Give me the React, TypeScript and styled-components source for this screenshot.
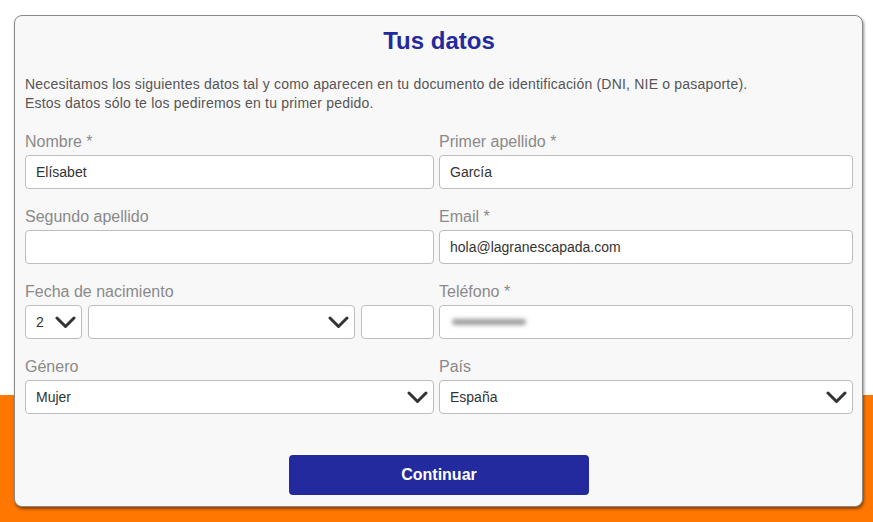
import React from "react";
import styled, { createGlobalStyle } from "styled-components";

const Global = createGlobalStyle`
  html, body { margin: 0; padding: 0; background: #fff; }
  body { font-family: "Liberation Sans", Arial, sans-serif; }
  * { box-sizing: border-box; }
`;

const Page = styled.div`
  width: 873px;
  height: 522px;
  padding: 15px 10px 0 14px;
  background: linear-gradient(to bottom, #ffffff 0, #ffffff 395px, #ff7600 395px, #ff7600 100%);
  overflow: hidden;
`;

const Card = styled.div`
  width: 849px;
  height: 492px;
  background: #f8f8f8;
  border: 1px solid #8a8a8a;
  border-radius: 8px;
  box-shadow: 1px 2px 3px rgba(0, 0, 0, 0.45);
  padding: 11px 9px 0 10px;
  display: flex;
  flex-direction: column;
`;

const Title = styled.h1`
  margin: 0;
  font-size: 24px;
  line-height: 28px;
  font-weight: bold;
  color: #232a9b;
  text-align: center;
`;

const Intro = styled.p`
  margin: 20px 0 0;
  font-size: 14px;
  letter-spacing: 0.2px;
  line-height: 19px;
  color: #555;
`;

const Grid = styled.div`
  margin-top: 20px;
  display: grid;
  grid-template-columns: 409px 414px;
  column-gap: 5px;
  row-gap: 19px;
`;

const Field = styled.div`
  display: flex;
  flex-direction: column;
`;

const Label = styled.label`
  font-size: 16px;
  line-height: 18px;
  color: #8a8a8a;
  margin-bottom: 4px;
`;

const Input = styled.input`
  height: 34px;
  width: 100%;
  border: 1px solid #bdbdbd;
  border-radius: 4px;
  background: #fff;
  padding: 0 10px;
  font-family: "Liberation Sans", Arial, sans-serif;
  font-size: 14px;
  color: #333;
  outline: none;
`;

const Box = styled.div<{ $w?: number }>`
  height: 34px;
  min-width: 0;
  ${(p) => (p.$w ? `width: ${p.$w}px; flex: none;` : "flex: 1 1 auto;")}
  border: 1px solid #bdbdbd;
  border-radius: 4px;
  background: #fff;
  padding: 0 5px 0 10px;
  display: flex;
  align-items: center;
  justify-content: space-between;
  font-size: 14px;
  color: #333;
  position: relative;
`;

const DateRow = styled.div`
  display: flex;
  gap: 6px;
`;

const Blur = styled.div`
  position: absolute;
  left: 12px;
  top: 13px;
  width: 74px;
  height: 6px;
  border-radius: 3px;
  background: #9c9c9c;
  filter: blur(2px);
`;

const Footer = styled.div`
  margin-top: 41px;
  display: flex;
  justify-content: center;
`;

const Button = styled.button`
  width: 300px;
  height: 40px;
  border: none;
  border-radius: 4px;
  background: #232a9e;
  color: #fff;
  font-family: "Liberation Sans", Arial, sans-serif;
  font-size: 16px;
  font-weight: bold;
`;

const Chevron = () => (
  <svg width="21" height="13" viewBox="0 0 21 13" fill="none">
    <path d="M2 2 L10.5 10.5 L19 2" stroke="#333" strokeWidth="3" strokeLinecap="round" strokeLinejoin="round" />
  </svg>
);

const Select = ({ value, w }: { value?: string; w?: number }) => (
  <Box $w={w}>
    <span>{value}</span>
    <Chevron />
  </Box>
);

export default function App() {
  return (
    <>
      <Global />
      <Page>
        <Card>
          <Title>Tus datos</Title>
          <Intro>
            Necesitamos los siguientes datos tal y como aparecen en tu documento de identificación (DNI, NIE o pasaporte).
            <br />
            Estos datos sólo te los pediremos en tu primer pedido.
          </Intro>
          <Grid>
            <Field>
              <Label>Nombre *</Label>
              <Input defaultValue="Elísabet" />
            </Field>
            <Field>
              <Label>Primer apellido *</Label>
              <Input defaultValue="García" />
            </Field>
            <Field>
              <Label>Segundo apellido</Label>
              <Input defaultValue="" />
            </Field>
            <Field>
              <Label>Email *</Label>
              <Input defaultValue="hola@lagranescapada.com" />
            </Field>
            <Field>
              <Label>Fecha de nacimiento</Label>
              <DateRow>
                <Select value="2" w={57} />
                <Select value="" />
                <Box $w={73} />
              </DateRow>
            </Field>
            <Field>
              <Label>Teléfono *</Label>
              <Box>
                <Blur />
              </Box>
            </Field>
            <Field>
              <Label>Género</Label>
              <Select value="Mujer" />
            </Field>
            <Field>
              <Label>País</Label>
              <Select value="España" />
            </Field>
          </Grid>
          <Footer>
            <Button>Continuar</Button>
          </Footer>
        </Card>
      </Page>
    </>
  );
}
